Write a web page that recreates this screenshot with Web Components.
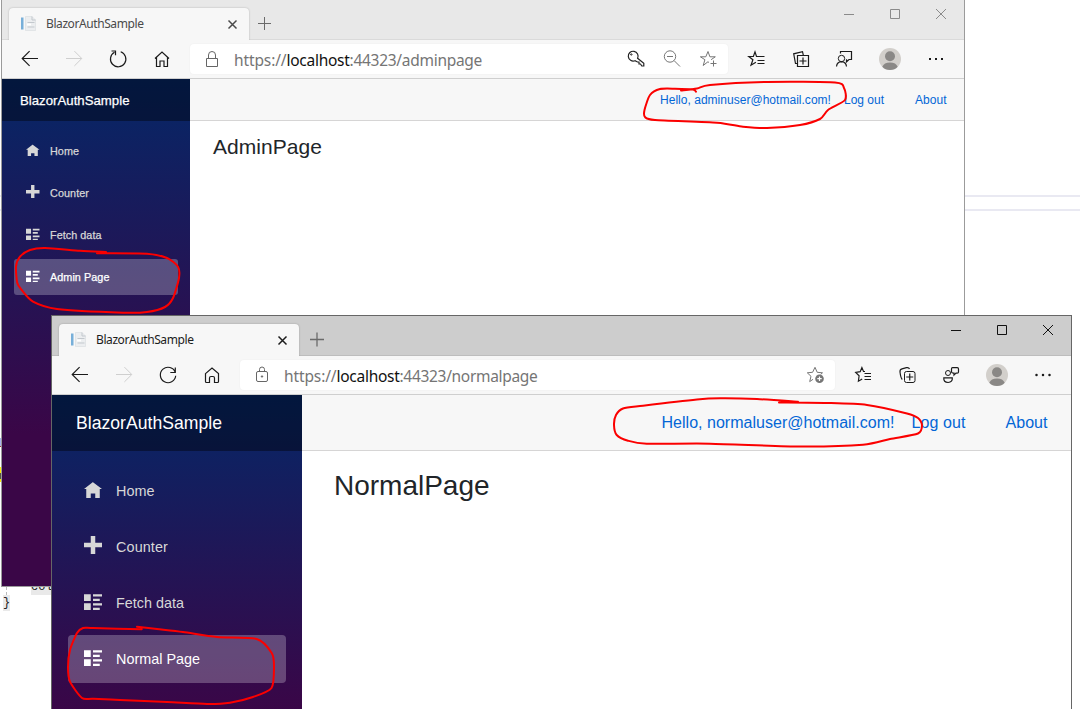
<!DOCTYPE html>
<html lang="en">
<head>
<meta charset="utf-8">
<title>BlazorAuthSample</title>
<style>
html,body{margin:0;height:100%;overflow:hidden;background:#fff}
</style>
</head>
<body>
<desk-top></desk-top>
<script>
const UI = '"Noto Sans","Open Sans",sans-serif';
const define = (name, css, html, setup) => customElements.define(name, class extends HTMLElement {
  connectedCallback() {
    if (this.shadowRoot) return;
    const root = this.attachShadow({mode: 'open'});
    root.innerHTML = `<style>${css}</style>${typeof html === 'function' ? html(this) : html}`;
    if (setup) setup(this, root);
  }
});

/* 20x20 line icons for the browser chrome */
const ICONS = {
  back: '<path d="M18 9.500H2.400M9.600 2.100 2.200 9.500l7.400 7.400" stroke-width="1.150"/>',
  forward: '<path d="M2 9.500h15.600M10.400 2.100 17.800 9.500l-7.400 7.400"/>',
  reloadOld: '<path d="M12.700 2.800A7.700 7.700 0 1 1 6.500 3.300M3.500 2h4v4.300" stroke-width="1.200"/>',
  reload: '<path d="M17.300 7.400A7.700 7.700 0 1 0 17.700 10.800M17.300 2.500v5h-5" stroke-width="1.200"/>',
  homeOld: '<path d="M3 9.500 10 3l7 6.500M4.500 8.300V17.500H8v-5.500h4v5.500h3.500V8.300" stroke-width="1.200"/>',
  home: '<path d="M3.500 8.600 10 3l6.500 5.600v7.900q0 1-1 1H12.500V13q0-1.500-1.500-1.500H9Q7.500 11.500 7.500 13v4.500H4.500q-1 0-1-1z" stroke-width="1.200"/>',
  lockOld: '<path d="M4.500 9.500h11v8h-11zM6.500 9.500V6q0-3.500 3.500-3.500T13.500 6v3.500"/>',
  lock: '<rect x="4.500" y="6.500" width="11" height="10" rx="1.500"/><path d="M7.500 6.500V4.500Q7.500 2 10 2t2.500 2.500v2"/><circle cx="10" cy="11.500" r=".7" fill="currentColor"/>',
  key: '<path d="M11.600 9.300a4.900 4.900 0 1 0-2.600 2.400l2.500 1.300h1.500v2h1.500l1.300 2h2v-2.700z" stroke-width="1.200"/><circle cx="5.300" cy="5.500" r=".7"/>',
  zoomOut: '<circle cx="8" cy="7.500" r="5.700"/><path d="M12 11.500l6 6M5 7.500h6"/>',
  starOld: '<path d="M11 13.600 10 12.700 5.200 16.500l1.700-5.800L2.400 7.800h5.400L10 2.500l1.900 5.300h5.400l-4.200 2.900M15.500 11.500v6M12.500 14.500h6"/>',
  star: '<path d="M8 14.300 4.700 16.600l1.300-5.300L2.300 7.800l5.300-.5L10 2.300l2.200 5 5.300.5-1.800 1.500"/><circle cx="14.500" cy="13.700" r="4.300" fill="currentColor" stroke="none"/><path d="M14.500 11.500v4.400M12.300 13.700h4.400" stroke="#fff" stroke-width="1.200"/>',
  favOld: '<path d="M12 7.500H10.500L9 2.800 7.400 7.500H2.800l4.100 3.200L5 16.200l4.900-2.900M11 7.500H18.500M11.500 11.500h7M11.500 14.500h7" stroke-width="1.200"/>',
  fav: '<path d="M12 6.500 10.500 6.500 8.900 2.500 7.200 6.700 2.700 7.500l3.400 3.300L5.400 16.200l3.800-2.300M11.500 8.500H18M11.500 11.500h6.500M11.500 14.500h6.500" stroke-width="1.200"/>',
  collOld: '<path d="M7.500 6.500h11v11h-11zM13 8.500v7M9.500 12h7M7.500 14.500H5.500L3.700 4.800 12.500 2.700l.8 3.500" stroke-width="1.200"/>',
  coll: '<rect x="7.500" y="6.500" width="10.500" height="11" rx="2"/><path d="M12.750 8.500v7M9.250 12h7M5.300 14.500Q3.700 13 3 7 2.700 4.500 5 3.900L9.500 2.700Q11.800 2.200 12.500 4" stroke-width="1.200"/>',
  feedOld: '<circle cx="7.500" cy="9.500" r="3.200"/><path d="M2.500 17.500q.5-4.600 5-4.800 4.500.2 5 4.800M6.500 4.500v-2h11v8H15l-2.500 2.300v-2.500" stroke-width="1.200"/>',
  feed: '<circle cx="7" cy="8" r="2.500"/><path d="M2.800 12.800h8.500q.4 4.500-4.200 4.700-4.700-.2-4.300-4.700zM11.500 2.700h4.700q1.300 0 1.300 1.200v3q0 1.200-1.300 1.200H15l-2 2V8.100q-2.500.2-2.500-1.500V3.900q0-1.200 1-1.200z" stroke-width="1.200"/>',
  avatar: '<circle cx="10" cy="10" r="11" fill="#d2cfcb" stroke="none"/><circle cx="10" cy="7.200" r="5" fill="#8a8886" stroke="none"/><path d="M2.300 17.800Q4 13.600 10 13.500q6 .1 7.700 4.300Q14.800 21 10 21T2.300 17.800z" fill="#8a8886" stroke="none"/>',
  dotsOld: '<path d="M3 9h2v2H3zM9 9h2v2H9zM15 9h2v2h-2z" fill="currentColor" stroke="none"/>',
  dots: '<path d="M3.500 10h.01M10 10h.01M16.500 10h.01" stroke-width="2.500" stroke-linecap="round"/>',
  min: '<path d="M5 10.500h10"/>',
  max: '<path d="M5.500 5.500h9v9h-9z"/>',
  close: '<path d="M5 5l10 10M15 5 5 15"/>',
  tabClose: '<path d="M6.500 6.500l8 8M14.500 6.500l-8 8" stroke-width="1.500"/>',
  plusOld: '<path d="M10.500 4v13M4 10.500h13"/>',
  plus: '<path d="M10 3.500v14M3 10.500h14" stroke-width="1.300"/>',
  page: '<path d="M2 3.500h2.500v12H2z" fill="#77afd9" stroke="none"/><path d="M6.500 2.500h6.500l3.500 3.500v10.500H6.500z" fill="#eceef0" stroke="#d9dcdf" stroke-width=".6"/><path d="M13 2.500V6h3.500M8.500 8.500h7M8.500 13h7" stroke="#c3c8cd"/><path d="M8 9.500h4v2H8z" fill="#fff" stroke="none"/>'
};
define('line-icon', ':host{display:block;width:20px;height:20px;flex:none}svg{display:block;overflow:visible}',
  el => `<svg width="20" height="20" viewBox="0 0 20 20" fill="none" stroke="currentColor">${ICONS[el.getAttribute('name')]}</svg>`);

/* Text whose tracking is adjusted so that it takes up a given width */
define('fit-text', ':host{display:block;white-space:nowrap;flex:none}', '<slot></slot>', el => {
  const want = parseFloat(el.getAttribute('width'));
  const cs = getComputedStyle(el), c = document.createElement('canvas').getContext('2d');
  c.font = `${cs.fontWeight} ${cs.fontSize} ${cs.fontFamily}`;
  const t = el.textContent;
  el.style.letterSpacing = ((want - c.measureText(t).width) / t.length).toFixed(3) + 'px';
});

/* Sidebar entry */
const OI = {
  home: '<path d="M4 .9l-4 3.100h1v4h2v-2h2v2h2v-4.030l1 .030-4-3z"/>',
  plus: '<path d="M3 0v3h-3v2h3v3h2v-3h3v-2h-3v-3h-2z"/>',
  list: '<path d="M0 1v3h3v-3h-3zm4 0v1h4v-1h-4zm0 2v1h3v-1h-3zm-4 2v3h3v-3h-3zm4 0v1h4v-1h-4zm0 2v1h3v-1h-3z"/>'
};
define('nav-item', `
:host{display:flex;align-items:center;height:calc(48px*var(--z));padding-left:calc(16px*var(--z));border-radius:calc(4px*var(--z));
 color:#d7d7d7;font-size:calc(14.4px*var(--z));line-height:1.5}
:host([active]){background:rgba(255,255,255,.25);color:#fff}
.i{width:calc(32px*var(--z));padding-bottom:calc(4px*var(--z))}
.t{padding-top:var(--drop);-webkit-text-stroke:var(--heavy) currentColor}
svg{display:block;width:calc(18px*var(--z));height:calc(18px*var(--z))}`,
  el => `<div class="i"><svg viewBox="0 0 8 8" fill="currentColor">${OI[el.getAttribute('icon')]}</svg></div><div class="t"><slot></slot></div>`);

/* The Blazor page; --z is its zoom factor */
define('blazor-app', `
:host{display:flex;flex:1;min-height:0;background:#fff;font-family:"Liberation Sans",Arial,sans-serif}
aside{width:var(--side);height:var(--sideh,100%);flex:none;background:linear-gradient(180deg,#052767 0%,#3a0647 70%)}
.brand{height:calc(56px*var(--z));display:flex;align-items:center;padding-left:var(--brandpad);background:rgba(0,0,0,.4);color:#fff;font-size:calc(17.6px*var(--z));box-sizing:border-box;-webkit-text-stroke:var(--heavy) currentColor}
nav{display:flex;flex-direction:column;gap:calc(8px*var(--z));padding:calc(16px*var(--z))}
main{flex:1;min-width:0}
.top{height:calc(56px*var(--z));box-sizing:border-box;border-bottom:1px solid #d6d5d5;background:#f7f7f7;display:flex;align-items:center;justify-content:flex-end;padding-right:calc(24px*var(--z) - .5px);color:#0366d6;font-size:calc(16px*var(--z))}
.out{margin:0 var(--g2) 0 var(--g1)}
h1{margin:0;padding:calc(17.6px*var(--z)) calc(32px*var(--z)) 0 calc(32px*var(--z) - var(--nudge));font-size:calc(28px*var(--z));font-weight:400;line-height:1.2;color:#212529}`,
  el => { const a = n => el.getAttribute(n), w = n => a('w').split(' ')[n]; return `
<aside><div class="brand"><fit-text width="${w(0)}">BlazorAuthSample</fit-text></div>
<nav>
<nav-item icon="home"><fit-text width="${w(1)}">Home</fit-text></nav-item>
<nav-item icon="plus"><fit-text width="${w(2)}">Counter</fit-text></nav-item>
<nav-item icon="list"><fit-text width="${w(3)}">Fetch data</fit-text></nav-item>
<nav-item icon="list" active><fit-text width="${w(4)}">${a('item')}</fit-text></nav-item>
</nav></aside>
<main><div class="top"><fit-text width="${w(5)}">Hello, ${a('user')}@hotmail.com!</fit-text><fit-text class="out" width="${w(6)}">Log out</fit-text><fit-text width="${w(7)}">About</fit-text></div>
<h1><fit-text width="${w(8)}">${a('heading')}</fit-text></h1></main>`; });

/* Browser tab */
define('browser-tab', `
:host{display:flex;align-items:center;box-sizing:border-box;width:240px;height:32px;padding:0 7px 1px 10px;background:#f7f7f7;border-radius:4px 4px 0 0;color:var(--tabtext);font:12px ${UI};box-shadow:0 0 2px rgba(0,0,0,.25);clip-path:inset(-4px -4px 0 -4px)}
.t{margin-left:7px;flex:1}line-icon.x{color:var(--tabtext)}`,
  '<line-icon name="page"></line-icon><div class="t"><slot></slot></div><line-icon class="x" name="tabClose"></line-icon>');

define('tool-button', ':host{display:flex;align-items:center;justify-content:center;flex:none;width:44px;height:30px;color:#1b1b1b}:host([dim]){color:#cfcfcf}',
  el => `<line-icon name="${el.getAttribute('icon')}"></line-icon>`);

define('address-bar', `
:host{display:flex;align-items:center;flex:1;height:30px;margin:0 6px;padding-right:2px;box-sizing:border-box;background:#fff;border-radius:4px;color:#757575;font:15.500px ${UI};box-shadow:0 0 2px rgba(0,0,0,.06)}
.u{flex:1;display:flex;padding-top:1px}b{font-weight:400;color:#111}::slotted(tool-button){width:36px;color:#767676}tool-button{color:#666}::slotted(tool-button[strong]){color:#222}`,
  el => `<tool-button icon="${el.getAttribute('lock')}"></tool-button><div class="u"><fit-text width="52.500">https://</fit-text><b><fit-text width="63">localhost</fit-text></b><fit-text width="${el.getAttribute('tail')}">:44323/${el.getAttribute('path')}</fit-text></div><slot></slot>`);

define('browser-window', `
:host{display:flex;flex-direction:column;box-sizing:border-box;border:1px solid var(--frame);background:#f7f7f7;overflow:hidden}
header{height:40px;box-sizing:border-box;display:flex;align-items:flex-end;padding-left:7px;background:var(--title);box-shadow:inset 0 -1px var(--titleline);flex:none}
.new{margin:0 auto 7px var(--newgap);color:#6a6a6a}
.ctl{display:flex;align-self:flex-start;color:var(--ctl)}.ctl tool-button{width:46px;height:28px;color:inherit}
.bar{height:39px;box-sizing:border-box;display:flex;align-items:center;padding:0 6px;border-bottom:1px solid #cfcfcf;flex:none}
.av{width:48px}`,
  el => { const m = el.hasAttribute('modern'), v = n => m ? n : n + 'Old'; return `
<header><browser-tab><fit-text width="97.500">BlazorAuthSample</fit-text></browser-tab><line-icon class="new" name="${v('plus')}"></line-icon>
<div class="ctl"><tool-button icon="min"></tool-button><tool-button icon="max"></tool-button><tool-button icon="close"></tool-button></div></header>
<div class="bar"><tool-button icon="back"></tool-button><tool-button dim icon="forward"></tool-button><tool-button icon="${v('reload')}"></tool-button><tool-button icon="${v('home')}"></tool-button>
<address-bar lock="${v('lock')}" path="${el.getAttribute('path')}" tail="${el.getAttribute('tail')}">${m ? '' : '<tool-button strong icon="key"></tool-button><tool-button icon="zoomOut"></tool-button>'}<tool-button icon="${v('star')}"></tool-button></address-bar>
<tool-button icon="${v('fav')}"></tool-button><tool-button icon="${v('coll')}"></tool-button><tool-button icon="${v('feed')}"></tool-button><tool-button class="av" icon="avatar"></tool-button><tool-button icon="${v('dots')}"></tool-button></div>
<slot></slot>`; });

/* Freehand red marker stroke through a list of points */
define('ink-mark', ':host{position:absolute;inset:0;pointer-events:none}svg{display:block;width:100%;height:100%}', el => {
  const p = el.getAttribute('points').split(' ').map(s => s.split(',').map(Number));
  let d = `M${p[0]}`;
  for (let i = 0; i < p.length - 1; i++) {
    const a = p[i - 1] || p[i], b = p[i], c = p[i + 1], e = p[i + 2] || c;
    d += `C${b[0] + (c[0] - a[0]) / 8} ${b[1] + (c[1] - a[1]) / 8} ${c[0] - (e[0] - b[0]) / 8} ${c[1] - (e[1] - b[1]) / 8} ${c[0]} ${c[1]}`;
  }
  return `<svg><path d="${d}" fill="none" stroke="#fb0000" stroke-width="2" stroke-linecap="round" stroke-linejoin="round"/></svg>`;
});

/* Slivers of the code editor behind the windows */
define('code-backdrop', `
:host{position:absolute;inset:0;font:12px "Liberation Mono",monospace;color:#222}
div{position:absolute;white-space:pre}
.l{left:0;right:0;height:2px;background:#e9e9f2}
.g{background:#e9e9e9;line-height:15px;height:15px}`, `
<div class="l" style="top:195px"></div><div class="l" style="top:209px"></div>
<div style="left:0;top:438px;width:2px;height:8px;background:#aab4f0"></div><div style="left:0;top:446px;width:2px;height:1px;background:#a33"></div>
<div style="left:0;top:467px;width:2px;height:15px;background:#ffef00"></div><div style="left:0;top:473px;width:1px;height:6px;background:#554"></div>
<div class="g" style="left:31px;top:580px">col</div>
<div style="left:6px;top:587px;height:8px;border-left:1px dashed #bbb"></div>
<div class="g" style="left:3px;top:595px;line-height:17px;height:16px">}</div>`);

define('desk-top', `
:host{display:block;position:relative;width:1080px;height:709px;overflow:hidden;background:#fff}
browser-window{position:absolute}
.a{left:1px;top:0;width:964px;height:587px;border-top:0;--frame:#9b9b9b;--title:#e8e8e8;--titleline:#dadada;--newgap:5px;--ctl:#8a8a8a;--tabtext:#4a4a4a}
.b{left:51px;top:315px;width:1021px;height:520px;--frame:#666;--title:#cdcdcd;--titleline:#bdbdbd;--newgap:8px;--ctl:#111;--tabtext:#1c1c1c}
.a blazor-app{--z:.75;--side:188px;--brandpad:18px;--g1:13px;--g2:31px;--drop:0px;--heavy:.25px;--nudge:1px}
.b blazor-app{--z:1;--side:250px;--brandpad:24px;--g1:17px;--g2:40px;--sideh:450px;--drop:2px;--heavy:0px;--nudge:0px}`, `
<code-backdrop></code-backdrop>
<browser-window class="a" path="adminpage" tail="132.500"><blazor-app item="Admin Page" user="adminuser" heading="AdminPage" w="109.500 29 39 51.500 59.500 171 40 31.500 109"></blazor-app></browser-window>
<browser-window class="b" modern path="normalpage" tail="138"><blazor-app item="Normal Page" user="normaluser" heading="NormalPage" w="146 38.500 52 68 84 233 54 42 155.500"></blazor-app></browser-window>
<ink-mark points="696,91.7 693,89.5 675,88.7 660,89 650,95 644.5,110 645,117 655,120 717,122.7 743,126.7 767,128 800,125 820,119 828,110 845,100 844,88 835,82.5 767,82 710,85 697,88.5 681,90.5"></ink-mark>
<ink-mark points="106,252 80,250.7 45,248 30,250 20,256.7 16,266.7 17.3,283 21.7,290 33,301.7 57,309 123,312.7 147,312 165,307 173,298 179,278 178,266.7 167,258 147,253.7 97,253.3"></ink-mark>
<ink-mark points="798,401.7 757,399 720,398.3 697,399.5 643,405.7 623,408.5 616,415 614,425 616.7,435 628,440.7 646.7,443.7 710,443.7 800,446.5 863,444.7 890,439 918,433.5 922,425 918,418 907,413.5 867,405 827,403 779,402.5"></ink-mark>
<ink-mark points="141.7,629.3 93,628 83,628 77,633 70,650 68,667 70,681.7 82,698 93,698.7 120,700 167,702 207,704 230,702.7 253,697 271.5,688 274,666.7 271.7,653 256.7,639 217,637 183,632 157,629 137,626.7"></ink-mark>`);
</script>
</body>
</html>
